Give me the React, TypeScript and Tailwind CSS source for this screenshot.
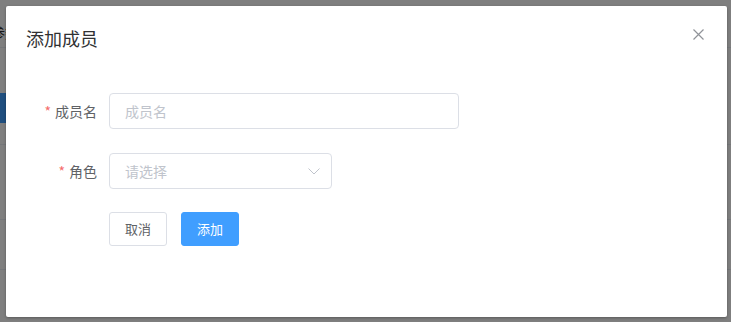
import React from "react";

export default function App() {
  const font = { fontFamily: '"Noto Sans CJK SC", "Noto Sans", sans-serif' };
  return (
    <div className="relative w-[731px] h-[322px] overflow-hidden bg-white" style={font}>
      {/* background page */}
      <div className="flex flex-col">
        <div className="h-[48px] border-b border-[#ebeef5] pt-[22px] -ml-[9px] text-[14px] text-[#303133] leading-5">
          参数
        </div>
        <div className="h-[45px]" />
        <div className="h-[30px] w-[200px] bg-[#409eff]" />
        <div className="h-[22px] border-b border-[#ebeef5]" />
        <div className="h-[75px] border-b border-[#ebeef5]" />
        <div className="h-[50px] border-b border-[#ebeef5]" />
      </div>
      {/* overlay */}
      <div className="absolute inset-0 bg-black/50" />
      {/* dialog */}
      <div className="absolute left-[6px] top-[6px] w-[721px] h-[311px] bg-white rounded-[2px] shadow-[0_1px_3px_rgba(0,0,0,0.3)]">
        <div className="relative px-5 pt-5 pb-[10px]">
          <span className="block text-[18px] leading-6 text-[#303133]">添加成员</span>
          <button className="absolute top-[23px] right-[23px] w-[11px] h-[11px]" aria-label="close">
            <svg viewBox="0 0 11 11" width="11" height="11">
              <path d="M0.5 0.5 L10.5 10.5 M10.5 0.5 L0.5 10.5" stroke="#909399" strokeWidth="1.2" fill="none" />
            </svg>
          </button>
        </div>
        <div className="pt-[33px] px-5">
          <div className="flex items-center h-9 mb-6">
            <label className="w-[83px] pr-3 text-right text-[14px] text-[#606266] leading-9">
              <span className="text-[#f56c6c] mr-1">*</span>成员名
            </label>
            <div className="w-[350px] h-9 border border-[#dcdfe6] rounded-[4px] flex items-center px-[15px] text-[14px] text-[#c0c4cc]">
              成员名
            </div>
          </div>
          <div className="flex items-center h-9 mb-[23px]">
            <label className="w-[83px] pr-3 text-right text-[14px] text-[#606266] leading-9">
              <span className="text-[#f56c6c] mr-1">*</span>角色
            </label>
            <div className="w-[223px] h-9 border border-[#dcdfe6] rounded-[4px] flex items-center justify-between pl-[15px] pr-[11px] text-[14px] text-[#c0c4cc]">
              <span>请选择</span>
              <svg viewBox="0 0 12 7" width="12" height="7">
                <path d="M0.5 0.5 L6 6 L11.5 0.5" stroke="#c0c4cc" strokeWidth="1" fill="none" />
              </svg>
            </div>
          </div>
          <div className="flex items-center pl-[83px] gap-[14px]">
            <button className="h-[34px] px-[15px] border border-[#dcdfe6] rounded-[3px] bg-white text-[13px] text-[#606266]">
              取消
            </button>
            <button className="h-[34px] px-[15px] border border-[#409eff] rounded-[3px] bg-[#409eff] text-[13px] text-white">
              添加
            </button>
          </div>
        </div>
      </div>
    </div>
  );
}
